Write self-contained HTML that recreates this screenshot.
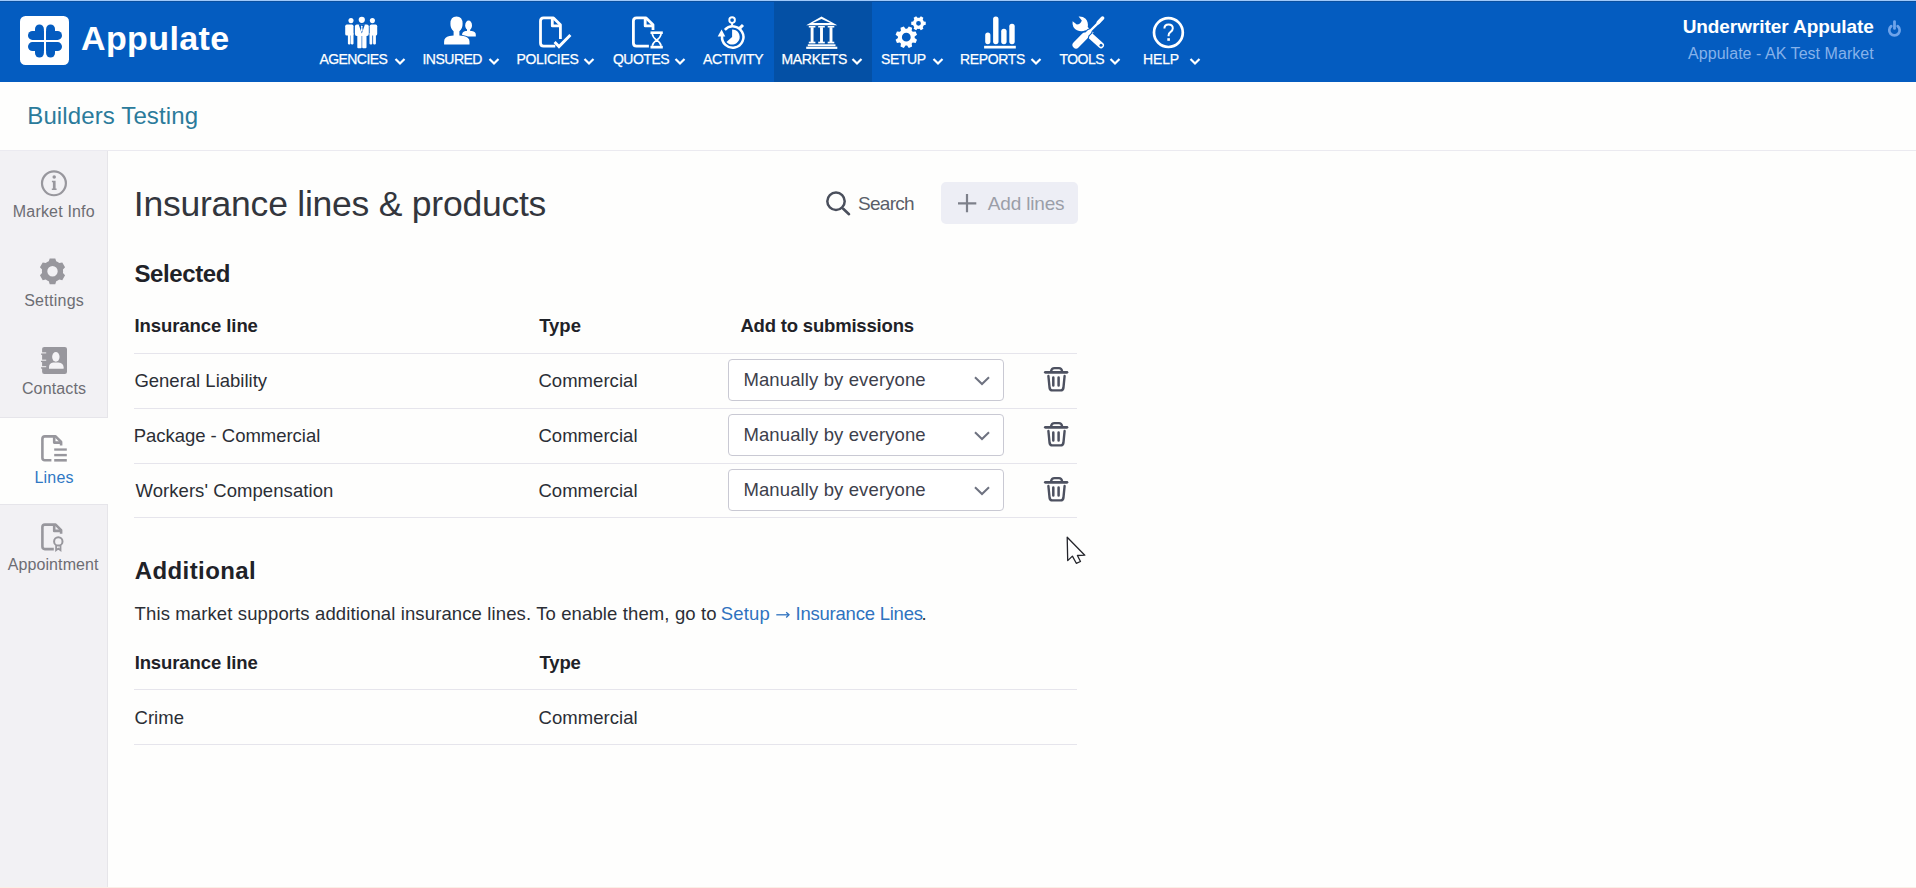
<!DOCTYPE html>
<html><head><meta charset="utf-8">
<style>
html,body{margin:0;padding:0;}
body{width:1916px;height:888px;position:relative;overflow:hidden;background:#fefefd;font-family:"Liberation Sans",sans-serif;}
.a{position:absolute;}
.t{position:absolute;white-space:nowrap;line-height:1;}
#hdr{position:absolute;left:0;top:0;width:1916px;height:82px;background:#045cc0;}
#hdrtop{position:absolute;left:0;top:0;width:1916px;height:1px;background:#9fc9fb;}
#hdrtop2{position:absolute;left:0;top:1px;width:1916px;height:1px;background:#0b4f9e;}
#mkt{position:absolute;left:774px;top:0;width:98px;height:82px;background:#0450a5;}
#sub{position:absolute;left:0;top:82px;width:1916px;height:68px;background:#fefefd;}
#subline{position:absolute;left:0;top:150px;width:1916px;height:1px;background:#ebeaf0;}
#side{position:absolute;left:0;top:151px;width:107px;height:737px;background:#f2f1f4;}
#sideline{position:absolute;left:107px;top:151px;width:1px;height:737px;background:#e6e5e9;}
#lines{position:absolute;left:0;top:418px;width:108px;height:86px;background:#fefefd;}
#l1{position:absolute;left:0;top:417px;width:107px;height:1px;background:#e6e5ea;}
#l2{position:absolute;left:0;top:504px;width:107px;height:1px;background:#e6e5ea;}
#logo{position:absolute;left:20px;top:16px;width:49px;height:49px;background:#fff;border-radius:5px;}
</style></head><body>
<div id="hdr"></div><div id="mkt"></div><div id="hdrtop"></div><div id="hdrtop2"></div>
<div id="sub"></div><div id="subline"></div>
<div id="side"></div><div id="sideline"></div><div id="lines"></div><div id="l1"></div><div id="l2"></div>
<div class="a" style="left:728px;top:359px;width:274px;height:40px;border:1px solid #c9c9d3;border-radius:4px;background:#fff"></div>
<div class="a" style="left:728px;top:414px;width:274px;height:40px;border:1px solid #c9c9d3;border-radius:4px;background:#fff"></div>
<div class="a" style="left:728px;top:469px;width:274px;height:40px;border:1px solid #c9c9d3;border-radius:4px;background:#fff"></div>
<div class="a" style="left:941px;top:181.5px;width:137px;height:42px;border-radius:5px;background:#edeef5"></div>
<div class="t" style="left:81.00px;top:21.21px;font-size:34px;font-weight:700;color:#ffffff;letter-spacing:0.386px;">Appulate</div>
<div class="t" style="left:319.44px;top:51.90px;font-size:14px;font-weight:400;color:#ffffff;letter-spacing:-0.566px;-webkit-text-stroke:0.25px #fff;">AGENCIES</div>
<div class="t" style="left:422.48px;top:51.90px;font-size:14px;font-weight:400;color:#ffffff;letter-spacing:-0.510px;-webkit-text-stroke:0.25px #fff;">INSURED</div>
<div class="t" style="left:516.50px;top:51.90px;font-size:14px;font-weight:400;color:#ffffff;letter-spacing:-0.334px;-webkit-text-stroke:0.25px #fff;">POLICIES</div>
<div class="t" style="left:612.96px;top:51.90px;font-size:14px;font-weight:400;color:#ffffff;letter-spacing:-0.504px;-webkit-text-stroke:0.25px #fff;">QUOTES</div>
<div class="t" style="left:702.90px;top:51.90px;font-size:14px;font-weight:400;color:#ffffff;letter-spacing:-0.334px;-webkit-text-stroke:0.25px #fff;">ACTIVITY</div>
<div class="t" style="left:781.54px;top:51.90px;font-size:14px;font-weight:400;color:#ffffff;letter-spacing:-0.330px;-webkit-text-stroke:0.25px #fff;">MARKETS</div>
<div class="t" style="left:881.00px;top:51.90px;font-size:14px;font-weight:400;color:#ffffff;letter-spacing:-0.405px;-webkit-text-stroke:0.25px #fff;">SETUP</div>
<div class="t" style="left:959.98px;top:51.90px;font-size:14px;font-weight:400;color:#ffffff;letter-spacing:-0.330px;-webkit-text-stroke:0.25px #fff;">REPORTS</div>
<div class="t" style="left:1059.44px;top:51.90px;font-size:14px;font-weight:400;color:#ffffff;letter-spacing:-0.540px;-webkit-text-stroke:0.25px #fff;">TOOLS</div>
<div class="t" style="left:1143.00px;top:51.90px;font-size:14px;font-weight:400;color:#ffffff;letter-spacing:-0.120px;-webkit-text-stroke:0.25px #fff;">HELP</div>
<div class="t" style="left:1682.65px;top:17.22px;font-size:19px;font-weight:700;color:#ffffff;letter-spacing:-0.071px;">Underwriter Appulate</div>
<div class="t" style="left:1688.10px;top:45.81px;font-size:16px;font-weight:400;color:#86b2ea;letter-spacing:0.037px;">Appulate - AK Test Market</div>
<div class="t" style="left:27.25px;top:104.27px;font-size:24px;font-weight:400;color:#2b7b9b;letter-spacing:0.120px;">Builders Testing</div>
<div class="t" style="left:12.80px;top:203.76px;font-size:16px;font-weight:400;color:#6d6d73;letter-spacing:0.180px;">Market Info</div>
<div class="t" style="left:24.20px;top:293.36px;font-size:16px;font-weight:400;color:#6d6d73;letter-spacing:0.257px;">Settings</div>
<div class="t" style="left:21.95px;top:381.16px;font-size:16px;font-weight:400;color:#6d6d73;letter-spacing:0.129px;">Contacts</div>
<div class="t" style="left:34.45px;top:469.56px;font-size:16px;font-weight:400;color:#2f78c4;letter-spacing:0.225px;">Lines</div>
<div class="t" style="left:7.75px;top:557.21px;font-size:16px;font-weight:400;color:#6d6d73;letter-spacing:0.090px;">Appointment</div>
<div class="t" style="left:133.85px;top:186.62px;font-size:35.5px;font-weight:400;color:#33363d;letter-spacing:-0.234px;">Insurance lines &amp; products</div>
<div class="t" style="left:858.05px;top:193.77px;font-size:19px;font-weight:400;color:#5a5e69;letter-spacing:-0.720px;">Search</div>
<div class="t" style="left:987.75px;top:193.77px;font-size:19px;font-weight:400;color:#9b9ea8;letter-spacing:-0.169px;">Add lines</div>
<div class="t" style="left:134.40px;top:262.32px;font-size:24px;font-weight:700;color:#1f2228;letter-spacing:-0.386px;">Selected</div>
<div class="t" style="left:134.40px;top:317.15px;font-size:18.5px;font-weight:700;color:#1f2228;letter-spacing:-0.069px;">Insurance line</div>
<div class="t" style="left:539.15px;top:317.15px;font-size:18.5px;font-weight:700;color:#1f2228;letter-spacing:-0.000px;">Type</div>
<div class="t" style="left:740.40px;top:317.15px;font-size:18.5px;font-weight:700;color:#1f2228;letter-spacing:-0.185px;">Add to submissions</div>
<div class="t" style="left:134.40px;top:372.20px;font-size:18.5px;font-weight:400;color:#2b2e35;letter-spacing:-0.000px;">General Liability</div>
<div class="t" style="left:133.65px;top:427.20px;font-size:18.5px;font-weight:400;color:#2b2e35;letter-spacing:-0.024px;">Package - Commercial</div>
<div class="t" style="left:135.45px;top:481.70px;font-size:18.5px;font-weight:400;color:#2b2e35;letter-spacing:0.068px;">Workers' Compensation</div>
<div class="t" style="left:538.40px;top:372.20px;font-size:18.5px;font-weight:400;color:#2b2e35;letter-spacing:0.050px;">Commercial</div>
<div class="t" style="left:538.40px;top:427.20px;font-size:18.5px;font-weight:400;color:#2b2e35;letter-spacing:0.050px;">Commercial</div>
<div class="t" style="left:538.40px;top:481.70px;font-size:18.5px;font-weight:400;color:#2b2e35;letter-spacing:0.050px;">Commercial</div>
<div class="t" style="left:743.45px;top:370.90px;font-size:18.5px;font-weight:400;color:#3d404b;letter-spacing:0.118px;">Manually by everyone</div>
<div class="t" style="left:743.45px;top:425.50px;font-size:18.5px;font-weight:400;color:#3d404b;letter-spacing:0.118px;">Manually by everyone</div>
<div class="t" style="left:743.45px;top:480.50px;font-size:18.5px;font-weight:400;color:#3d404b;letter-spacing:0.118px;">Manually by everyone</div>
<div class="t" style="left:134.75px;top:559.12px;font-size:24px;font-weight:700;color:#1f2228;letter-spacing:0.400px;">Additional</div>
<div class="t" style="left:134.57px;top:604.97px;font-size:18.5px;font-weight:400;color:#2b2e35;letter-spacing:0.123px;">This market supports additional insurance lines. To enable them, go to</div>
<div class="t" style="left:720.63px;top:604.97px;font-size:18.5px;font-weight:400;color:#2f72bf;letter-spacing:0.225px;">Setup</div>
<div class="t" style="left:795.47px;top:604.97px;font-size:18.5px;font-weight:400;color:#2f72bf;letter-spacing:-0.219px;">Insurance Lines</div>
<div class="t" style="left:921.52px;top:605.41px;font-size:18.5px;font-weight:400;color:#2b2e35;letter-spacing:0.000px;">.</div>
<div class="t" style="left:134.65px;top:654.04px;font-size:18.5px;font-weight:700;color:#1f2228;letter-spacing:-0.104px;">Insurance line</div>
<div class="t" style="left:539.50px;top:654.04px;font-size:18.5px;font-weight:700;color:#1f2228;letter-spacing:-0.150px;">Type</div>
<div class="t" style="left:134.60px;top:708.94px;font-size:18.5px;font-weight:400;color:#2b2e35;letter-spacing:-0.000px;">Crime</div>
<div class="t" style="left:538.60px;top:708.94px;font-size:18.5px;font-weight:400;color:#2b2e35;letter-spacing:0.050px;">Commercial</div>
<svg class="a" style="left:393.5px;top:57px" width="12" height="9" viewBox="0 0 12 9"><path d="M1.5 2 L6 6.5 L10.5 2" fill="none" stroke="#fff" stroke-width="2.2"/></svg>
<svg class="a" style="left:487.5px;top:57px" width="12" height="9" viewBox="0 0 12 9"><path d="M1.5 2 L6 6.5 L10.5 2" fill="none" stroke="#fff" stroke-width="2.2"/></svg>
<svg class="a" style="left:583.3px;top:57px" width="12" height="9" viewBox="0 0 12 9"><path d="M1.5 2 L6 6.5 L10.5 2" fill="none" stroke="#fff" stroke-width="2.2"/></svg>
<svg class="a" style="left:674.1px;top:57px" width="12" height="9" viewBox="0 0 12 9"><path d="M1.5 2 L6 6.5 L10.5 2" fill="none" stroke="#fff" stroke-width="2.2"/></svg>
<svg class="a" style="left:851.3px;top:57px" width="12" height="9" viewBox="0 0 12 9"><path d="M1.5 2 L6 6.5 L10.5 2" fill="none" stroke="#fff" stroke-width="2.2"/></svg>
<svg class="a" style="left:931.6px;top:57px" width="12" height="9" viewBox="0 0 12 9"><path d="M1.5 2 L6 6.5 L10.5 2" fill="none" stroke="#fff" stroke-width="2.2"/></svg>
<svg class="a" style="left:1030.2px;top:57px" width="12" height="9" viewBox="0 0 12 9"><path d="M1.5 2 L6 6.5 L10.5 2" fill="none" stroke="#fff" stroke-width="2.2"/></svg>
<svg class="a" style="left:1109.0px;top:57px" width="12" height="9" viewBox="0 0 12 9"><path d="M1.5 2 L6 6.5 L10.5 2" fill="none" stroke="#fff" stroke-width="2.2"/></svg>
<svg class="a" style="left:1188.9px;top:57px" width="12" height="9" viewBox="0 0 12 9"><path d="M1.5 2 L6 6.5 L10.5 2" fill="none" stroke="#fff" stroke-width="2.2"/></svg>
<div class="a" style="left:134px;top:353px;width:943px;height:1px;background:#e6e5ec"></div>
<div class="a" style="left:134px;top:408px;width:943px;height:1px;background:#e6e5ec"></div>
<div class="a" style="left:134px;top:463px;width:943px;height:1px;background:#e6e5ec"></div>
<div class="a" style="left:134px;top:517px;width:943px;height:1px;background:#e6e5ec"></div>
<div class="a" style="left:134px;top:689px;width:943px;height:1px;background:#e6e5ec"></div>
<div class="a" style="left:134px;top:744px;width:943px;height:1px;background:#e6e5ec"></div>
<svg class="a" style="left:972px;top:375.5px" width="20" height="10" viewBox="0 0 20 10"><path d="M3 1.2 L10 8 L17 1.2" fill="none" stroke="#6e7280" stroke-width="2"/></svg>
<svg class="a" style="left:1042px;top:367.0px" width="28" height="26" viewBox="0 0 28 26"><path d="M3.3 5.3 H25" stroke="#4d5160" stroke-width="2.7" stroke-linecap="round" fill="none"/><path d="M9 4.5 Q9.5 1.2 12.5 1.2 H17 Q19.5 1.2 20.2 4.5" stroke="#4d5160" stroke-width="2.3" fill="none"/><path d="M6.4 9 L7.6 21 Q8 23.4 10.4 23.4 H18.6 Q21 23.4 21.4 21 L22.6 9" stroke="#4d5160" stroke-width="2.4" stroke-linecap="round" fill="none"/><path d="M11.3 10.5 V18.5 M16.6 10.5 V18.5" stroke="#4d5160" stroke-width="2.5" stroke-linecap="round"/></svg>
<svg class="a" style="left:972px;top:430.5px" width="20" height="10" viewBox="0 0 20 10"><path d="M3 1.2 L10 8 L17 1.2" fill="none" stroke="#6e7280" stroke-width="2"/></svg>
<svg class="a" style="left:1042px;top:422.0px" width="28" height="26" viewBox="0 0 28 26"><path d="M3.3 5.3 H25" stroke="#4d5160" stroke-width="2.7" stroke-linecap="round" fill="none"/><path d="M9 4.5 Q9.5 1.2 12.5 1.2 H17 Q19.5 1.2 20.2 4.5" stroke="#4d5160" stroke-width="2.3" fill="none"/><path d="M6.4 9 L7.6 21 Q8 23.4 10.4 23.4 H18.6 Q21 23.4 21.4 21 L22.6 9" stroke="#4d5160" stroke-width="2.4" stroke-linecap="round" fill="none"/><path d="M11.3 10.5 V18.5 M16.6 10.5 V18.5" stroke="#4d5160" stroke-width="2.5" stroke-linecap="round"/></svg>
<svg class="a" style="left:972px;top:485.5px" width="20" height="10" viewBox="0 0 20 10"><path d="M3 1.2 L10 8 L17 1.2" fill="none" stroke="#6e7280" stroke-width="2"/></svg>
<svg class="a" style="left:1042px;top:477.0px" width="28" height="26" viewBox="0 0 28 26"><path d="M3.3 5.3 H25" stroke="#4d5160" stroke-width="2.7" stroke-linecap="round" fill="none"/><path d="M9 4.5 Q9.5 1.2 12.5 1.2 H17 Q19.5 1.2 20.2 4.5" stroke="#4d5160" stroke-width="2.3" fill="none"/><path d="M6.4 9 L7.6 21 Q8 23.4 10.4 23.4 H18.6 Q21 23.4 21.4 21 L22.6 9" stroke="#4d5160" stroke-width="2.4" stroke-linecap="round" fill="none"/><path d="M11.3 10.5 V18.5 M16.6 10.5 V18.5" stroke="#4d5160" stroke-width="2.5" stroke-linecap="round"/></svg>
<svg class="a" style="left:774px;top:610px" width="18" height="10" viewBox="0 0 18 10"><path d="M2.3 4.8 H14.6" stroke="#2f72bf" stroke-width="1.3"/><path d="M12.2 2.2 L15 4.8 L12.2 7.4" fill="none" stroke="#2f72bf" stroke-width="1.3"/></svg>
<svg class="a" style="left:822px;top:187px" width="32" height="32" viewBox="0 0 32 32"><circle cx="14" cy="14.2" r="8.7" stroke="#4a4f5c" stroke-width="2.5" fill="none"/><path d="M21.2 21.8 L27 27.2" stroke="#4a4f5c" stroke-width="2.6" stroke-linecap="round"/></svg>
<svg class="a" style="left:955px;top:191px" width="24" height="24" viewBox="0 0 24 24"><path d="M3 12.3 H21.3 M12 3 V21.3" stroke="#7d808a" stroke-width="2.2"/></svg>
<svg class="a" style="left:1062px;top:533px" width="30" height="36" viewBox="0 0 30 36"><path d="M5.2 4.2 L5.7 27.6 L10.4 23.1 L14.3 30.3 L18.5 28.5 L15.4 22.5 L22.8 22.2 Z" fill="#fff" stroke="#24252b" stroke-width="1.3" stroke-linejoin="round"/></svg>
<svg class="a" style="left:20px;top:16px" width="49" height="49" viewBox="0 0 49 49"><rect x="0" y="0" width="49" height="49" rx="5.5" fill="#fff"/><g fill="#045cc0"><g transform=""><path d="M23.9,24 V12.9 A4.45,4.45 0 0 0 15,12.9 V24 Z"/><path d="M23.9,23.9 H12.45 A4.45,4.45 0 0 1 12.45,15 H23.9 Z"/></g><g transform="translate(50,0) scale(-1,1)"><path d="M23.9,24 V12.9 A4.45,4.45 0 0 0 15,12.9 V24 Z"/><path d="M23.9,23.9 H12.45 A4.45,4.45 0 0 1 12.45,15 H23.9 Z"/></g><g transform="translate(0,50) scale(1,-1)"><path d="M23.9,24 V12.9 A4.45,4.45 0 0 0 15,12.9 V24 Z"/><path d="M23.9,23.9 H12.45 A4.45,4.45 0 0 1 12.45,15 H23.9 Z"/></g><g transform="translate(50,50) scale(-1,-1)"><path d="M23.9,24 V12.9 A4.45,4.45 0 0 0 15,12.9 V24 Z"/><path d="M23.9,23.9 H12.45 A4.45,4.45 0 0 1 12.45,15 H23.9 Z"/></g></g></svg>
<svg class="a" style="left:340px;top:12px" width="44" height="40" viewBox="0 0 44 40"><g fill="#ffffff"><circle cx="11" cy="8.6" r="2.55"/><circle cx="21.8" cy="7.8" r="3.1"/><circle cx="32.4" cy="8.6" r="2.55"/><rect x="5.2" y="12.6" width="8.3" height="10.9" rx="1.6"/><rect x="7.9" y="21" width="2.6" height="11.4" rx="0.8"/><rect x="10.9" y="21" width="2.6" height="11.4" rx="0.8"/><rect x="29.7" y="12.6" width="7.5" height="10.9" rx="1.6"/><rect x="29.5" y="21" width="2.8" height="11.4" rx="0.8"/><rect x="33.1" y="21" width="2.8" height="11.4" rx="0.8"/><rect x="14.9" y="12.4" width="13.9" height="11.6" rx="2"/><rect x="17.3" y="22" width="4.3" height="14.2" rx="0.9"/><rect x="22.2" y="22" width="4.3" height="14.2" rx="0.9"/></g><path d="M18.6,12.3 L25.0,12.3 L21.8,21.6 Z" fill="#045cc0"/><path d="M21.8,13.4 L22.8,14.6 L22.3,15.4 L22.7,18.6 L21.8,19.9 L20.9,18.6 L21.3,15.4 L20.8,14.6 Z" fill="#ffffff"/></svg>
<svg class="a" style="left:438px;top:12px" width="44" height="40" viewBox="0 0 44 40"><g fill="#ffffff"><ellipse cx="30.6" cy="13.4" rx="3.4" ry="4.8"/><rect x="29.0" y="16" width="3.2" height="4"/><path d="M24.1,24.6 V22.8 Q24.1,19.6 27.6,19.1 H33.8 Q37.8,19.6 37.8,22.8 V24.6 Z"/></g><path d="M6.1,32.6 V29.8 Q6.1,25.2 11.5,24.1 L15.6,23.4 V19.2 Q12.4,16.8 12.4,11.8 Q12.4,4.5 18.5,4.5 Q24.6,4.5 24.6,11.8 Q24.6,16.8 21.4,19.2 V23.4 L25.5,24.1 Q31.5,25.2 31.5,29.8 V32.6 Z" fill="#ffffff" stroke="#045cc0" stroke-width="1.6"/><path d="M6.1,32.6 V29.8 Q6.1,25.2 11.5,24.1 L15.6,23.4 V19.2 Q12.4,16.8 12.4,11.8 Q12.4,4.5 18.5,4.5 Q24.6,4.5 24.6,11.8 Q24.6,16.8 21.4,19.2 V23.4 L25.5,24.1 Q31.5,25.2 31.5,29.8 V32.6 Z" fill="#ffffff"/></svg>
<svg class="a" style="left:533px;top:12px" width="44" height="40" viewBox="0 0 44 40"><path d="M27.4,27 V12.8 L20.5,5.9 H10.6 Q7.5,5.9 7.5,9 V31.1 Q7.5,34.2 10.6,34.2 H22.3" fill="none" stroke="#ffffff" stroke-width="2.8" stroke-linejoin="round"/><path d="M19.3,5.9 V13.9 H27.4" fill="none" stroke="#ffffff" stroke-width="2.8" stroke-linejoin="round"/><path d="M21.6,30.0 L26.0,34.6 L37.4,23.0" fill="none" stroke="#ffffff" stroke-width="2.9"/></svg>
<svg class="a" style="left:625px;top:12px" width="44" height="40" viewBox="0 0 44 40"><path d="M28,18 V12.8 L21.1,5.9 H11.5 Q8.4,5.9 8.4,9 V31.1 Q8.4,34.2 11.5,34.2 H23.9" fill="none" stroke="#ffffff" stroke-width="2.8" stroke-linejoin="round"/><path d="M20.2,5.9 V13.9 H28" fill="none" stroke="#ffffff" stroke-width="2.8" stroke-linejoin="round"/><rect x="25.5" y="19.4" width="12.3" height="2.6" fill="#ffffff"/><rect x="25.5" y="33.8" width="12.3" height="2.7" fill="#ffffff"/><path d="M27.3,22 Q27.8,25.5 31.6,28.1 Q27.8,30.7 27.3,33.8 M36.1,22 Q35.6,25.5 31.8,28.1 Q35.6,30.7 36.1,33.8" fill="none" stroke="#ffffff" stroke-width="1.7"/></svg>
<svg class="a" style="left:710px;top:12px" width="44" height="40" viewBox="0 0 44 40"><circle cx="22.1" cy="8.1" r="2.8" fill="none" stroke="#ffffff" stroke-width="1.9"/><path d="M22.1,10.8 V13.5" stroke="#ffffff" stroke-width="2"/><path d="M14.85,17.84 A10.7,10.7 0 1 1 12.10,23.80" fill="none" stroke="#ffffff" stroke-width="2.5"/><path d="M11.6,17.6 L7.7,24.6 L15.3,24.6 Z" fill="#ffffff"/><path d="M29.6,16.4 L33.0,13.0" stroke="#ffffff" stroke-width="3"/><path d="M22.1,25.0 L22.1,17.4 A7.6,7.6 0 1 1 16.45,30.09 Z" fill="#ffffff"/></svg>
<svg class="a" style="left:799px;top:12px" width="44" height="40" viewBox="0 0 44 40"><path fill-rule="evenodd" fill="#ffffff" d="M7.2,13.3 L22.5,4.4 L38.3,13.3 Z M13.8,10.9 L22.5,6.9 L31.4,10.9 Z"/><rect x="9.8" y="14.0" width="6.6" height="1.5" fill="#ffffff"/><rect x="11.65" y="15.2" width="2.9" height="14.8" fill="#ffffff"/><rect x="9.8" y="29.7" width="6.6" height="1.7" fill="#ffffff"/><rect x="19.2" y="14.0" width="6.6" height="1.5" fill="#ffffff"/><rect x="21.05" y="15.2" width="2.9" height="14.8" fill="#ffffff"/><rect x="19.2" y="29.7" width="6.6" height="1.7" fill="#ffffff"/><rect x="28.7" y="14.0" width="6.6" height="1.5" fill="#ffffff"/><rect x="30.55" y="15.2" width="2.9" height="14.8" fill="#ffffff"/><rect x="28.7" y="29.7" width="6.6" height="1.7" fill="#ffffff"/><rect x="8.8" y="32.3" width="27.7" height="1.9" fill="#ffffff"/><rect x="7.2" y="34.7" width="31.1" height="2.2" fill="#ffffff"/></svg>
<svg class="a" style="left:889px;top:12px" width="44" height="40" viewBox="0 0 44 40"><path fill-rule="evenodd" fill="#ffffff" d="M25.66,26.00 L28.01,27.70 L26.64,31.01 L23.78,30.55 A8.4,8.4 0 0 1 22.65,31.68 L23.11,34.54 L19.80,35.91 L18.10,33.56 A8.4,8.4 0 0 1 16.50,33.56 L14.80,35.91 L11.49,34.54 L11.95,31.68 A8.4,8.4 0 0 1 10.82,30.55 L7.96,31.01 L6.59,27.70 L8.94,26.00 A8.4,8.4 0 0 1 8.94,24.40 L6.59,22.70 L7.96,19.39 L10.82,19.85 A8.4,8.4 0 0 1 11.95,18.72 L11.49,15.86 L14.80,14.49 L16.50,16.84 A8.4,8.4 0 0 1 18.10,16.84 L19.80,14.49 L23.11,15.86 L22.65,18.72 A8.4,8.4 0 0 1 23.78,19.85 L26.64,19.39 L28.01,22.70 L25.66,24.40 A8.4,8.4 0 0 1 25.66,26.00 Z M12.90,25.20 a4.4,4.4 0 1 0 8.80,0 a4.4,4.4 0 1 0 -8.80,0 Z"/><path fill-rule="evenodd" fill="#ffffff" d="M34.78,9.44 L36.76,9.86 L36.76,12.74 L34.78,13.16 A5.6,5.6 0 0 1 33.75,14.94 L34.38,16.87 L31.88,18.31 L30.53,16.81 A5.6,5.6 0 0 1 28.47,16.81 L27.12,18.31 L24.62,16.87 L25.25,14.94 A5.6,5.6 0 0 1 24.22,13.16 L22.24,12.74 L22.24,9.86 L24.22,9.44 A5.6,5.6 0 0 1 25.25,7.66 L24.62,5.73 L27.12,4.29 L28.47,5.79 A5.6,5.6 0 0 1 30.53,5.79 L31.88,4.29 L34.38,5.73 L33.75,7.66 A5.6,5.6 0 0 1 34.78,9.44 Z M27.10,11.30 a2.4,2.4 0 1 0 4.80,0 a2.4,2.4 0 1 0 -4.80,0 Z"/></svg>
<svg class="a" style="left:978px;top:12px" width="44" height="40" viewBox="0 0 44 40"><rect x="7.2" y="20.5" width="5.2" height="11.7" rx="2.6" fill="#ffffff"/><rect x="15.1" y="4.5" width="5.4" height="27.7" rx="2.6" fill="#ffffff"/><rect x="23.2" y="16.7" width="5.4" height="15.5" rx="2.6" fill="#ffffff"/><rect x="31.3" y="11.7" width="5.4" height="20.5" rx="2.6" fill="#ffffff"/><rect x="6.1" y="33.8" width="31.7" height="2.7" fill="#ffffff"/></svg>
<svg class="a" style="left:1066px;top:12px" width="44" height="40" viewBox="0 0 44 40"><path d="M22.5,22.0 L35.0,33.2" stroke="#ffffff" stroke-width="6" stroke-linecap="round"/><path fill="#ffffff" d="M6.6,9.2 Q5.8,15.5 11,18.2 Q15.5,20.3 19.5,18.3 L24.5,23.3 L27.6,20.4 L21.7,14.9 Q22.6,10.3 19.6,6.8 Q17,4.2 12.6,4.5 L15.8,8.5 Q14.5,12.5 10.8,12.6 Z"/><circle cx="35.0" cy="33.2" r="1.5" fill="#045cc0"/><path d="M10.0,33.0 L18.6,24.2" stroke="#045cc0" stroke-width="9.4" stroke-linecap="round"/><path d="M17.5,25.5 L23.3,19.8" stroke="#045cc0" stroke-width="6.4" stroke-linecap="round"/><path d="M22,21 L33.3,9.8" stroke="#045cc0" stroke-width="4.4" stroke-linecap="round"/><path d="M32.3,10.6 L36.6,6.1" stroke="#045cc0" stroke-width="5.6" stroke-linecap="round"/><path fill="#ffffff" d="M22.5,22.0 L25,24.3 L27.6,20.4 L24.2,17.5 Z" opacity="0"/><path d="M10.0,33.0 L18.6,24.2" stroke="#ffffff" stroke-width="7.0" stroke-linecap="round"/><path d="M17.5,25.5 L23.3,19.8" stroke="#ffffff" stroke-width="4.4" stroke-linecap="round"/><path d="M22,21 L33.3,9.8" stroke="#ffffff" stroke-width="2.4" stroke-linecap="round"/><path d="M32.3,10.6 L36.6,6.1" stroke="#ffffff" stroke-width="3.6" stroke-linecap="round"/></svg>
<svg class="a" style="left:1146px;top:12px" width="44" height="40" viewBox="0 0 44 40"><circle cx="22.4" cy="20.6" r="14.4" fill="none" stroke="#ffffff" stroke-width="2.7"/><path d="M18.4,16.6 Q18.4,12.6 22.6,12.6 Q26.8,12.6 26.8,16.3 Q26.8,18.6 24.4,20.1 Q22.6,21.2 22.6,23.3 V24.3" fill="none" stroke="#ffffff" stroke-width="2"/><rect x="21.3" y="26.2" width="2.6" height="2.6" fill="#ffffff"/></svg>
<svg class="a" style="left:1880px;top:14px" width="28" height="28" viewBox="0 0 28 28"><path d="M11.25,12.10 A5.2,5.2 0 1 0 17.65,12.10" fill="none" stroke="#6ea3ea" stroke-width="2.7" stroke-linecap="round"/><path d="M14.5,7.6 V14.4" stroke="#6ea3ea" stroke-width="2.8" stroke-linecap="round"/></svg>
<svg class="a" style="left:36px;top:164px" width="36" height="36" viewBox="0 0 36 36"><circle cx="17.95" cy="19.3" r="11.95" fill="none" stroke="#98979d" stroke-width="2.2"/><circle cx="18.2" cy="13.1" r="1.75" fill="#98979d"/><path fill="#98979d" d="M15.9,16.7 H19.6 V24.5 H20.6 V26.1 H15.8 V24.5 H16.9 V18.3 H15.9 Z"/></svg>
<svg class="a" style="left:36px;top:253px" width="36" height="36" viewBox="0 0 36 36"><path fill-rule="evenodd" fill="#98979d" d="M20.22,28.23 L19.28,31.20 L13.72,31.20 L12.78,28.23 A10.6,10.6 0 0 1 9.76,26.48 L6.71,27.16 L3.94,22.35 L6.04,20.04 A10.6,10.6 0 0 1 6.04,16.56 L3.94,14.25 L6.71,9.44 L9.76,10.12 A10.6,10.6 0 0 1 12.78,8.37 L13.72,5.40 L19.28,5.40 L20.22,8.37 A10.6,10.6 0 0 1 23.24,10.12 L26.29,9.44 L29.06,14.25 L26.96,16.56 A10.6,10.6 0 0 1 26.96,20.04 L29.06,22.35 L26.29,27.16 L23.24,26.48 A10.6,10.6 0 0 1 20.22,28.23 Z M11.30,18.30 a5.2,5.2 0 1 0 10.40,0 a5.2,5.2 0 1 0 -10.40,0 Z"/></svg>
<svg class="a" style="left:36px;top:342px" width="36" height="36" viewBox="0 0 36 36"><rect x="6.1" y="4.9" width="24.9" height="27.1" rx="2.2" fill="#98979d"/><rect x="5" y="11.4" width="2" height="1.4" fill="#98979d"/><rect x="5.5" y="10.4" width="4.7" height="1" fill="#f4f3f6"/><rect x="5" y="18.7" width="2" height="1.4" fill="#98979d"/><rect x="5.5" y="17.7" width="4.7" height="1" fill="#f4f3f6"/><rect x="5" y="25.2" width="2" height="1.4" fill="#98979d"/><rect x="5.5" y="24.2" width="4.7" height="1" fill="#f4f3f6"/><g fill="#f4f3f6"><ellipse cx="19.85" cy="14.9" rx="3.7" ry="4.8"/><path d="M13,26.8 V25.2 Q13,21.4 17.2,20.6 H22.4 Q27.6,21.4 27.6,25.2 V26.8 Z"/></g></svg>
<svg class="a" style="left:36px;top:430px" width="36" height="36" viewBox="0 0 36 36"><path d="M15.4,30.3 H8.9 Q6.4,30.3 6.4,27.8 V8.9 Q6.4,6.4 8.9,6.4 H19.6 L25.1,11.9 V15.4" fill="none" stroke="#98979d" stroke-width="2.6" stroke-linejoin="round"/><path d="M18.2,6.4 V12.6 H25.1" fill="none" stroke="#98979d" stroke-width="2.6" stroke-linejoin="round"/><rect x="18.2" y="18.4" width="12.6" height="2.3" fill="#98979d"/><rect x="18.2" y="23.9" width="12.6" height="2.4" fill="#98979d"/><rect x="18.2" y="29.0" width="12.6" height="2.6" fill="#98979d"/></svg>
<svg class="a" style="left:36px;top:518px" width="36" height="36" viewBox="0 0 36 36"><path d="M17.8,31.1 H8.9 Q6.4,31.1 6.4,28.6 V9.1 Q6.4,6.6 8.9,6.6 H19.6 L25.1,12.1 V15.8" fill="none" stroke="#98979d" stroke-width="2.6" stroke-linejoin="round"/><path d="M18.2,6.6 V12.9 H25.1" fill="none" stroke="#98979d" stroke-width="2.6" stroke-linejoin="round"/><circle cx="22.3" cy="23.4" r="4.2" fill="none" stroke="#98979d" stroke-width="2"/><path d="M20.1,27.2 V32.2 L22.3,30.6 L24.5,32.2 V27.2" fill="none" stroke="#98979d" stroke-width="1.8"/></svg>
<div id="btmline" style="position:absolute;left:0;top:887px;width:1916px;height:1px;background:#fbefe6"></div>
</body></html>
